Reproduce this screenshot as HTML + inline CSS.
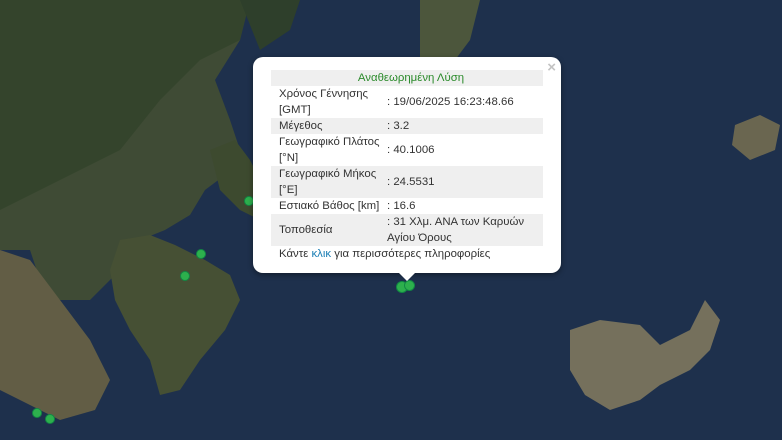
<!DOCTYPE html>
<html><head><meta charset="utf-8"><style>
body{margin:0;width:782px;height:440px;overflow:hidden;background:#1e304c;font-family:"Liberation Sans","DejaVu Sans",sans-serif}
#map{position:absolute;left:0;top:0}
.pop{position:absolute;left:253px;top:57px;width:308px;height:216px;background:#fff;border-radius:10px;box-shadow:0 2px 6px rgba(0,0,0,.4)}
.tip{position:absolute;left:398px;top:272px;width:0;height:0;border-left:9px solid transparent;border-right:9px solid transparent;border-top:9px solid #fff}
.x{position:absolute;right:5px;top:2px;color:#c3c3c3;font-size:15px;font-weight:bold}
table{position:absolute;left:18px;top:13px;width:272px;border-collapse:collapse;font-size:11.4px;color:#333;line-height:16px}
td{padding:0 0 0 8px;vertical-align:middle}
tr.g{background:#efefef}
td.v{padding-left:0}
.h{text-align:center;color:#2a8a2a;height:15px}
a{color:#1b7fb5;text-decoration:none}
.dot{position:absolute;width:8px;height:8px;border-radius:50%;background:#2db04d;border:1px solid #184}
</style></head><body>
<svg id="map" width="782" height="440" viewBox="0 0 782 440">
<rect width="782" height="440" fill="#1e304c"/>
<path d="M0 0H250L240 40 215 80 230 120 240 150 225 175 205 190 190 215 165 230 140 240 120 270 90 300 60 300 40 280 30 250 0 250Z" fill="#3f4b35"/>
<path d="M0 0H250L240 40 200 60 160 100 120 150 80 170 40 190 0 210Z" fill="#34442c"/>
<path d="M0 250 30 260 60 300 90 340 110 380 95 410 60 420 20 400 0 390Z" fill="#625d45"/>
<path d="M120 240 150 235 175 245 205 260 230 275 240 300 225 330 200 360 180 390 160 395 150 360 130 330 115 300 110 270Z" fill="#465034"/>
<path d="M210 150 235 140 250 160 265 190 300 200 330 220 310 230 270 225 240 210 220 190Z" fill="#3d4a2f"/>
<path d="M420 0H480L470 40 455 60 420 58Z" fill="#4c563c"/>
<path d="M735 125 760 115 780 125 775 150 750 160 732 145Z" fill="#6a6650"/>
<path d="M570 330 600 320 640 325 660 345 690 330 705 300 720 320 710 350 690 370 660 385 640 400 610 410 585 395 570 370Z" fill="#75705c"/>
<path d="M240 0 300 0 290 30 260 50Z" fill="#2e3f2b"/>
</svg>
<div class="dot" style="left:396px;top:281px;width:10px;height:10px"></div>
<div class="dot" style="left:404px;top:280px;width:9px;height:9px"></div>
<div class="dot" style="left:196px;top:249px"></div>
<div class="dot" style="left:180px;top:271px"></div>
<div class="dot" style="left:244px;top:196px"></div>
<div class="dot" style="left:32px;top:408px"></div>
<div class="dot" style="left:45px;top:414px"></div>
<div class="pop"><span class="x">×</span>
<table>
<tr class="g"><td colspan="2" class="h">Αναθεωρημένη Λύση</td></tr>
<tr style="height:32px"><td style="width:108px">Χρόνος Γέννησης [GMT]</td><td class="v">: 19/06/2025 16:23:48.66</td></tr>
<tr class="g" style="height:16px"><td>Μέγεθος</td><td class="v">: 3.2</td></tr>
<tr style="height:32px"><td>Γεωγραφικό Πλάτος [°N]</td><td class="v">: 40.1006</td></tr>
<tr class="g" style="height:32px"><td>Γεωγραφικό Μήκος [°E]</td><td class="v">: 24.5531</td></tr>
<tr style="height:16px"><td>Εστιακό Βάθος [km]</td><td class="v">: 16.6</td></tr>
<tr class="g" style="height:32px"><td>Τοποθεσία</td><td class="v">: 31 Χλμ. ΑΝΑ των Καρυών Αγίου Όρους</td></tr>
<tr style="height:16px"><td colspan="2">Κάντε <a>κλικ</a> για περισσότερες πληροφορίες</td></tr>
</table></div>
<div class="tip"></div>
</body></html>
